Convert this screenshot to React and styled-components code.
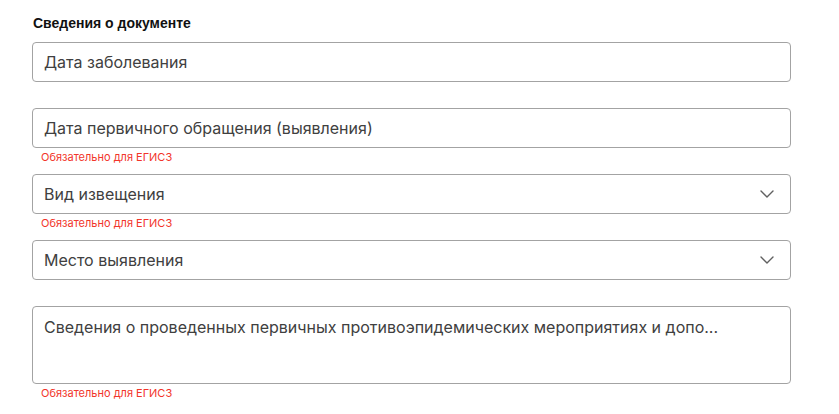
import React from 'react';
import styled, { createGlobalStyle } from 'styled-components';

const Global = createGlobalStyle`
    body {
        margin: 0;
        background: #fff;
        font-family: Inter, "Noto Sans", sans-serif;
    }
`

const Section = styled.section`
    width: 759px;
    padding: 14px 0 0 32px;
    display: flex;
    flex-direction: column;
`

const Title = styled.h3`
    margin: 0 0 10px 1px;
    font-family: "Liberation Sans", Arial, sans-serif;
    font-size: 14px;
    line-height: 18px;
    font-weight: 700;
    color: #111;
`

const Group = styled.div`
    display: flex;
    flex-direction: column;
`

const Box = styled.div`
    box-sizing: border-box;
    height: ${p => p.tall ? '78px' : '40px'};
    border: 1px solid #a3a3a3;
    border-radius: 4px;
    padding: ${p => p.tall ? '10px 16px 0 11px' : '0 16px 0 11px'};
    display: flex;
    align-items: ${p => p.tall ? 'flex-start' : 'center'};
    justify-content: space-between;
    font-size: 16px;
    line-height: 20px;
    color: #404040;
    white-space: nowrap;
`

const Hint = styled.div`
    height: 26px;
    box-sizing: border-box;
    padding: 2px 0 0 9px;
    font-size: 11px;
    line-height: 14px;
    color: #f2352a;
`

const Chevron = () => (
    <svg width="14" height="8" viewBox="0 0 14 8" fill="none">
        <polyline points="1,1 7,7 13,1" stroke="#606060" strokeWidth="1.4" strokeLinecap="round" strokeLinejoin="round" />
    </svg>
)

const fields = [
    { label: 'Дата заболевания' },
    { label: 'Дата первичного обращения (выявления)', required: true },
    { label: 'Вид извещения', select: true, required: true },
    { label: 'Место выявления', select: true },
    { label: 'Сведения о проведенных первичных противоэпидемических мероприятиях и допо...', tall: true, required: true },
]

export default function App() {
    return (
        <>
            <Global />
            <Section>
                <Title>Сведения о документе</Title>
                {fields.map(f => (
                    <Group key={f.label}>
                        <Box tall={f.tall}>
                            <span>{f.label}</span>
                            {f.select && <Chevron />}
                        </Box>
                        <Hint>{f.required && 'Обязательно для ЕГИСЗ'}</Hint>
                    </Group>
                ))}
            </Section>
        </>
    )
}
